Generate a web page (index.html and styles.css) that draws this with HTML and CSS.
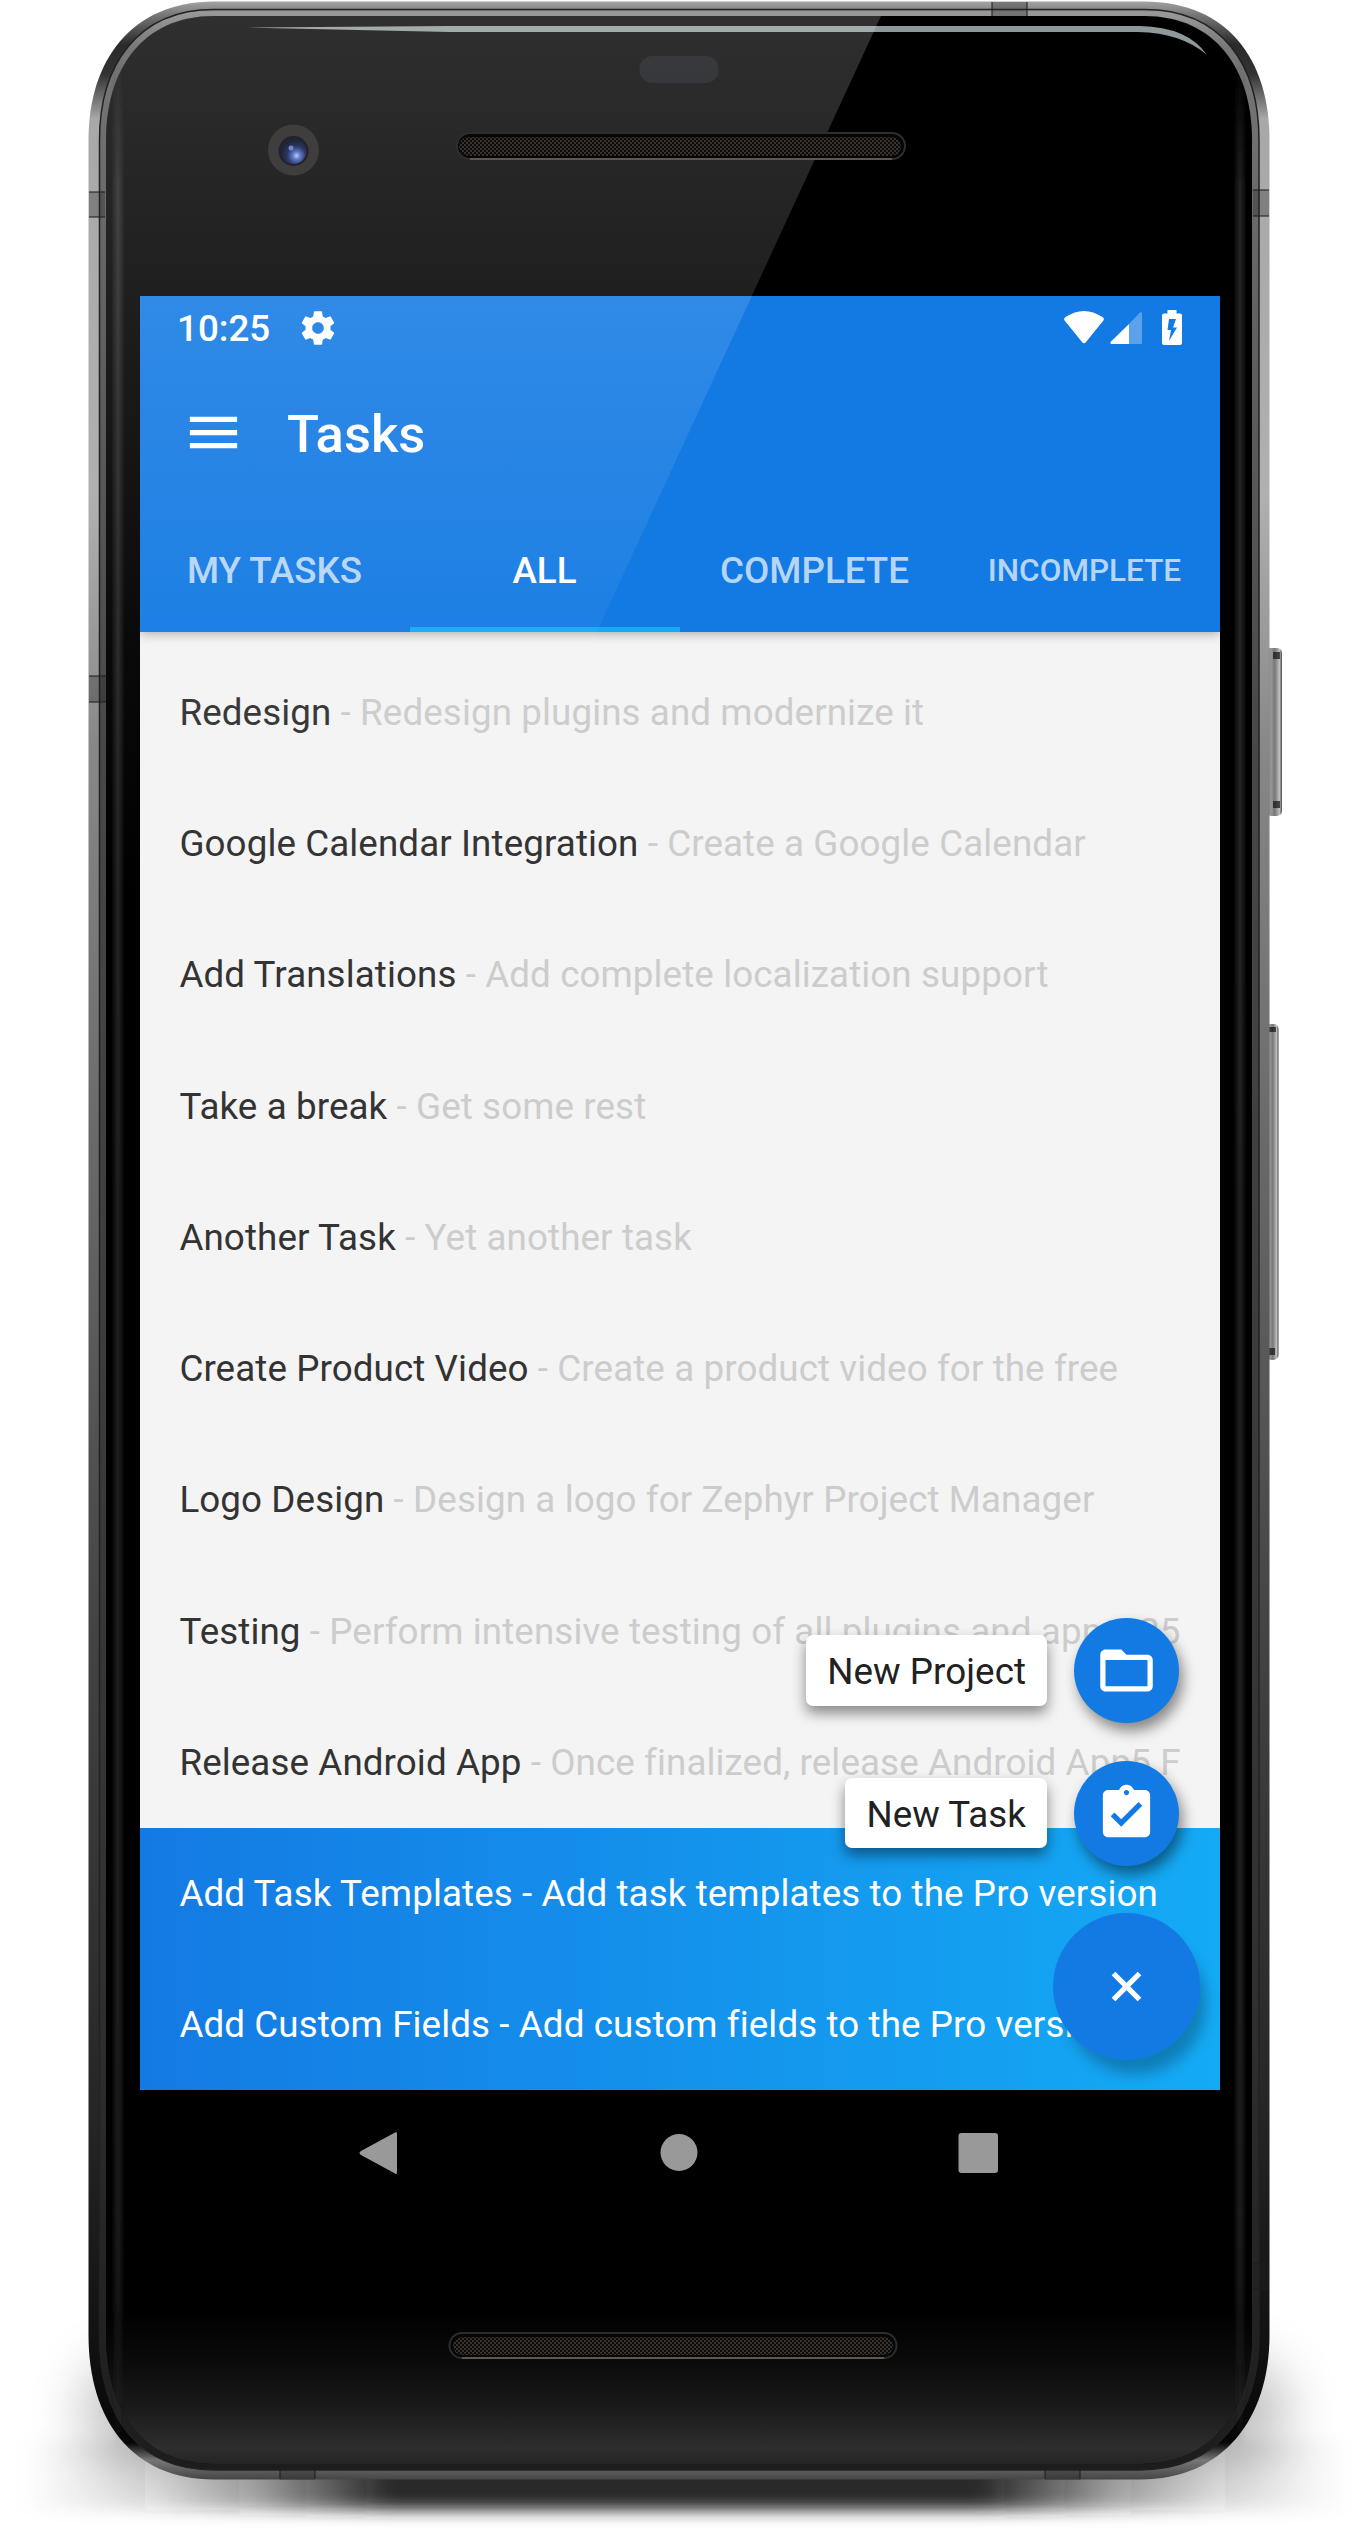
FILE: index.html
```html
<!DOCTYPE html>
<html lang="en">
<head>
<meta charset="utf-8">
<title>Tasks</title>
<link rel="stylesheet" href="styles.css">
</head>
<body>
<div class="device">
  <svg class="frame" viewBox="0 0 1370 2534" aria-hidden="true">
    <defs>
      <linearGradient id="metal" x1="0" y1="0" x2="0" y2="2480" gradientUnits="userSpaceOnUse">
        <stop offset="0" stop-color="#a8a8a8"/><stop offset=".006" stop-color="#777"/>
        <stop offset=".018" stop-color="#2a2a2a"/><stop offset=".03" stop-color="#333"/><stop offset=".048" stop-color="#a8a8a8"/>
        <stop offset=".2" stop-color="#b0b0b0"/><stop offset=".3" stop-color="#888"/><stop offset=".5" stop-color="#626262"/><stop offset=".65" stop-color="#454545"/>
        <stop offset=".85" stop-color="#262626"/><stop offset=".95" stop-color="#101010"/><stop offset=".985" stop-color="#060606"/>
        <stop offset=".992" stop-color="#777"/><stop offset="1" stop-color="#444"/>
      </linearGradient>
      <linearGradient id="metalInner" x1="0" y1="0" x2="0" y2="2480" gradientUnits="userSpaceOnUse">
        <stop offset="0" stop-color="#444"/><stop offset=".005" stop-color="#999"/><stop offset=".02" stop-color="#777"/><stop offset=".1" stop-color="#666"/>
        <stop offset=".3" stop-color="#484848"/><stop offset=".8" stop-color="#303030"/><stop offset="1" stop-color="#1c1c1c"/>
      </linearGradient>
      <linearGradient id="chin" x1="0" y1="2310" x2="0" y2="2464" gradientUnits="userSpaceOnUse">
        <stop offset="0" stop-color="#000"/><stop offset=".35" stop-color="#0b0b0b"/><stop offset=".65" stop-color="#1b1b1b"/><stop offset=".9" stop-color="#2e2e2e"/><stop offset="1" stop-color="#242424"/>
      </linearGradient>
      <linearGradient id="rim" x1="0" y1="60" x2="0" y2="2450" gradientUnits="userSpaceOnUse">
        <stop offset="0" stop-color="#333" stop-opacity="0"/><stop offset=".06" stop-color="#2c2c2c"/><stop offset=".9" stop-color="#242424"/><stop offset="1" stop-color="#333" stop-opacity="0"/>
      </linearGradient>
      <linearGradient id="floor" x1="20" y1="0" x2="1350" y2="0" gradientUnits="userSpaceOnUse">
        <stop offset="0" stop-color="#222" stop-opacity="0"/><stop offset=".1" stop-color="#222" stop-opacity=".14"/>
        <stop offset=".18" stop-color="#222" stop-opacity=".42"/><stop offset=".28" stop-color="#222" stop-opacity=".97"/>
        <stop offset=".72" stop-color="#222" stop-opacity=".97"/><stop offset=".82" stop-color="#222" stop-opacity=".42"/>
        <stop offset=".9" stop-color="#222" stop-opacity=".14"/><stop offset="1" stop-color="#222" stop-opacity="0"/>
      </linearGradient>
      <linearGradient id="button" x1="0" y1="0" x2="1" y2="0">
        <stop offset="0" stop-color="#555"/><stop offset=".3" stop-color="#999"/><stop offset=".55" stop-color="#777"/><stop offset=".85" stop-color="#c0c0c0"/><stop offset="1" stop-color="#444"/>
      </linearGradient>
      <pattern id="mesh" width="4" height="4" patternUnits="userSpaceOnUse">
        <rect width="4" height="4" fill="#0c0b09"/><circle cx="1" cy="1" r=".9" fill="#4b463c"/><circle cx="3" cy="3" r=".9" fill="#4b463c"/>
      </pattern>
      <filter id="soft" x="-10%" y="-60%" width="120%" height="220%"><feGaussianBlur stdDeviation="8"/></filter>
      <filter id="softer" x="-20%" y="-100%" width="140%" height="300%"><feGaussianBlur stdDeviation="28"/></filter>
      <filter id="edge" filterUnits="userSpaceOnUse" x="90" y="0" width="1180" height="2480"><feGaussianBlur stdDeviation="2.500"/></filter>
    </defs>

    <rect x="84" y="2360" width="1202" height="104" rx="50" fill="#000" opacity=".26" filter="url(#softer)"/>
    <rect x="20" y="2440" width="1330" height="70" fill="url(#floor)" filter="url(#soft)"/>

    <rect x="1266" y="648" width="16" height="168" rx="5" fill="url(#button)"/>
    <path d="M1273 652h7v7h-7zM1273 801h7v7h-7z" fill="#111" opacity=".7"/>
    <rect x="1266" y="1024" width="12.500" height="336" rx="5" fill="url(#button)"/>
    <path d="M1269 1027h7v5h-7zM1269 1348h6v7h-6z" fill="#111" opacity=".7"/>

    <path d="M214 1.500H1144C1228 1.500 1269.500 60 1269.500 140V2335C1269.500 2420 1222 2479.500 1140 2479.500H214C132 2479.500 88.500 2420 88.500 2335V140C88.500 60 132 1.500 214 1.500Z" fill="url(#metal)"/>
    <path d="M214 9.500H1144C1223 9.500 1259 66 1259 140V2335C1259 2416 1216 2470 1140 2470H214C137 2470 99.500 2416 99.500 2335V140C99.500 66 137 9.500 214 9.500Z" fill="url(#metalInner)" stroke="#222" stroke-width="1.500"/>
    <path d="M214 16H1144C1216 16 1252 70 1252 140V2335C1252 2410 1212 2464 1140 2464H214C142 2464 106 2410 106 2335V140C106 70 142 16 214 16Z" fill="#000"/>
    <path d="M106 2300H1252V2335C1252 2410 1212 2464 1140 2464H214C142 2464 106 2410 106 2335Z" fill="url(#chin)"/>
    <path d="M118 2400V100M1240 2400V100" fill="none" stroke="#2a2a2a" stroke-width="0"/>
    <rect x="115" y="60" width="6" height="2390" fill="url(#rim)" filter="url(#edge)"/>
    <rect x="1237" y="60" width="6" height="2390" fill="url(#rim)" filter="url(#edge)"/>

    <g fill="#222" fill-opacity=".3">
      <path d="M89 192h16v25h-16zM89 676h17v26h-17zM1253 190h16v26h-16zM992 2h35v14h-35zM1253 2263h16v26h-16zM280 2466h35v14h-35zM1045 2466h35v14h-35z"/>
    </g>
    <path d="M89 192h16M89 217h16M89 676h17M89 702h17M1253 190h16M1253 216h16M1253 2263h16M1253 2289h16M992 2v14M1027 2v14M280 2466v13M315 2466v13M1045 2466v13M1080 2466v13" stroke="#1c1c1c" stroke-opacity=".7" stroke-width="1.500"/>

    <rect x="639.500" y="56" width="79" height="27" rx="13" fill="#0e0f14"/>
    <path d="M247 27.500L450 26H1140Q1188 27 1207 55Q1182 33 1138 32H450Z" fill="#8f989a"/>
  </svg>

  <main class="screen">
    <header class="app-bar">
      <div class="status">
        <span class="clock">10:25</span>
        <svg class="gear" viewBox="0 0 24 24"><path d="M19.430 12.980c.04-.32.07-.64.07-.98s-.03-.66-.07-.98l2.110-1.650c.19-.15.24-.42.12-.64l-2-3.460c-.12-.22-.39-.3-.61-.22l-2.490 1c-.52-.4-1.080-.73-1.690-.98l-.38-2.650C14.460 2.180 14.250 2 14 2h-4c-.25 0-.46.18-.49.42l-.38 2.650c-.61.25-1.170.59-1.690.98l-2.490-1c-.23-.09-.49 0-.61.22l-2 3.460c-.13.22-.07.49.12.64l2.110 1.650c-.04.32-.07.65-.07.98s.03.66.07.98l-2.110 1.650c-.19.15-.24.42-.12.64l2 3.460c.12.22.39.3.61.22l2.490-1c.52.4 1.080.73 1.690.98l.38 2.650c.03.24.24.42.49.42h4c.25 0 .46-.18.49-.42l.38-2.650c.61-.25 1.170-.59 1.690-.98l2.490 1c.23.09.49 0 .61-.22l2-3.460c.12-.22.07-.49-.12-.64l-2.110-1.650zM12 15.500c-1.930 0-3.500-1.570-3.500-3.500s1.570-3.500 3.500-3.500 3.500 1.570 3.500 3.500-1.570 3.500-3.500 3.500z"/></svg>
        <svg class="signals" viewBox="0 0 118 36">
          <path d="M1 11Q-1 9 1.500 7Q20-5 38.500 7Q41 9 39 11L22 32Q20 34.500 18 32Z"/>
          <path d="M65 14V34H47.500Q45.500 33.500 47 31.500Z"/>
          <path d="M65 14L76 2.500Q78 1.500 78 3.500V32.500Q78 34 76.500 34H65Z" opacity=".3"/>
          <path fill-rule="evenodd" d="M103.500 0H112.500V3.500H116Q118 3.500 118 5.500V33Q118 35 116 35H100Q98 35 98 33V5.500Q98 3.500 100 3.500H103.500ZM105 9L103.500 20H107L105 31L113 17.500H109L112 9Z"/>
        </svg>
      </div>
      <div class="toolbar">
        <svg class="menu" viewBox="0 0 24 24"><path d="M3 18h18v-2H3v2zm0-5h18v-2H3v2zm0-7v2h18V6H3z"/></svg>
        <h1 class="title">Tasks</h1>
      </div>
      <nav class="tabs">
        <span class="tab">MY TASKS</span>
        <span class="tab tab-active">ALL</span>
        <span class="tab">COMPLETE</span>
        <span class="tab tab-small">INCOMPLETE</span>
      </nav>
    </header>

    <ul class="tasks">
      <li class="task"><span class="name">Redesign</span><span class="note"> - Redesign plugins and modernize it</span></li>
      <li class="task"><span class="name">Google Calendar Integration</span><span class="note"> - Create a Google Calendar</span></li>
      <li class="task"><span class="name">Add Translations</span><span class="note"> - Add complete localization support</span></li>
      <li class="task"><span class="name">Take a break</span><span class="note"> - Get some rest</span></li>
      <li class="task"><span class="name">Another Task</span><span class="note"> - Yet another task</span></li>
      <li class="task"><span class="name">Create Product Video</span><span class="note"> - Create a product video for the free</span></li>
      <li class="task"><span class="name">Logo Design</span><span class="note"> - Design a logo for Zephyr Project Manager</span></li>
      <li class="task"><span class="name">Testing</span><span class="note"> - Perform intensive testing of all plugins and apps</span><span class="due">25</span></li>
      <li class="task"><span class="name">Release Android App</span><span class="note"> - Once finalized, release Android App</span><span class="due">5 F</span></li>
      <li class="task task-pro">Add Task Templates - Add task templates to the Pro version</li>
      <li class="task task-pro">Add Custom Fields - Add custom fields to the Pro version</li>
    </ul>

    <div class="actions">
      <div class="action">
        <span class="label">New Project</span>
        <span class="fab"><svg viewBox="0 0 24 24"><path d="M20 6h-8l-2-2H4c-1.100 0-1.990.9-1.990 2L2 18c0 1.100.9 2 2 2h16c1.100 0 2-.9 2-2V8c0-1.100-.9-2-2-2zm0 12H4V8h16v10z"/></svg></span>
      </div>
      <div class="action">
        <span class="label">New Task</span>
        <span class="fab"><svg viewBox="0 0 24 24"><path d="M19 3h-4.180C14.400 1.840 13.300 1 12 1c-1.300 0-2.400.84-2.820 2H5c-1.100 0-2 .9-2 2v14c0 1.100.9 2 2 2h14c1.100 0 2-.9 2-2V5c0-1.100-.9-2-2-2zm-7 0c.55 0 1 .45 1 1s-.45 1-1 1-1-.45-1-1 .45-1 1-1zm-2 14l-4-4 1.410-1.410L10 14.170l6.590-6.590L18 9l-8 8z"/></svg></span>
      </div>
      <span class="fab fab-main"><svg viewBox="0 0 24 24"><path transform="rotate(45 12 12)" d="M19 13h-6v6h-2v-6H5v-2h6V5h2v6h6v2z"/></svg></span>
    </div>
  </main>

  <div class="nav-keys">
    <svg viewBox="0 0 40 44"><path d="M37 1.500Q39 0 39 3V41Q39 44 37 42.500L3 24Q0 22 3 20Z"/></svg>
    <svg viewBox="0 0 40 44"><circle cx="21" cy="21.500" r="18.500"/></svg>
    <svg viewBox="0 0 40 44"><rect x=".5" y="2" width="39.500" height="40" rx="3"/></svg>
  </div>

  <svg class="glass" viewBox="0 0 1370 2534" aria-hidden="true">
    <defs>
      <linearGradient id="glare" x1="0" y1="16" x2="0" y2="900" gradientUnits="userSpaceOnUse">
        <stop offset="0" stop-color="#fff" stop-opacity=".185"/><stop offset=".31" stop-color="#fff" stop-opacity=".122"/>
        <stop offset=".7" stop-color="#fff" stop-opacity=".04"/><stop offset="1" stop-color="#fff" stop-opacity="0"/>
      </linearGradient>
      <radialGradient id="lens" cx=".62" cy=".68" r=".6">
        <stop offset="0" stop-color="#b9caf8"/><stop offset=".25" stop-color="#5f78c8"/><stop offset=".6" stop-color="#2c3860"/><stop offset="1" stop-color="#20243a"/>
      </radialGradient>
    </defs>
    <path d="M214 16H881L473 900H106V140C106 70 142 16 214 16Z" fill="url(#glare)"/>
    <circle cx="293.500" cy="150" r="25.500" fill="#403d3d"/>
    <circle cx="293.500" cy="151" r="15" fill="#22222a"/>
    <circle cx="293.500" cy="151" r="13" fill="url(#lens)"/>
    <circle cx="291" cy="148" r="2.500" fill="#6f87d0"/>
    <g stroke-width="2" fill="#060606">
      <rect x="457" y="133" width="448" height="26" rx="13" stroke="#2e2e2e"/>
      <rect x="449.500" y="2333" width="447" height="25" rx="12.500" stroke="#2c2c2c"/>
      <path d="M470 159H892M462 2358H884" stroke="#5a5852"/>
    </g>
    <rect x="459" y="137" width="442" height="19" rx="9.500" fill="url(#mesh)"/>
    <rect x="453" y="2337" width="440" height="18" rx="9" fill="url(#mesh)"/>
  </svg>
</div>
</body>
</html>
```
FILE: styles.css
```css
* { box-sizing: border-box; }

body {
  margin: 0;
  background: #fff;
  font-family: Roboto, "Liberation Sans", sans-serif;
  font-size: 36.75px;
}

.device {
  position: relative;
  width: 1370px;
  height: 2534px;
  padding: 296px 150px 0 140px;
  overflow: hidden;
}

.frame, .glass {
  position: absolute;
  inset: 0;
  width: 1370px;
  height: 2534px;
}

.screen {
  position: relative;
  width: 1080px;
  height: 1794px;
  overflow: hidden;
  background: #f4f4f4;
}

.app-bar {
  position: relative;
  height: 336px;
  background: #147ae3;
  color: #fff;
  box-shadow: 0 2px 10px rgba(0, 0, 0, .3);
}

.status {
  display: flex;
  align-items: center;
  height: 63px;
  padding: 0 38px 0 37px;
}

.clock { width: 121px; padding-top: 2px; font-weight: 500; }
.gear { width: 40px; height: 40px; fill: #fff; }
.signals { width: 118px; height: 36px; margin-left: auto; fill: #fff; }

.toolbar {
  display: flex;
  align-items: center;
  height: 147px;
  padding-left: 42px;
}

.menu { width: 63px; height: 63px; fill: #fff; }

.title {
  margin: 0 0 0 42px;
  padding-top: 4px;
  font-size: 52.5px;
  font-weight: 500;
  line-height: 1;
}

.tabs {
  display: grid;
  grid-template-columns: repeat(4, 1fr);
  height: 126px;
}

.tab {
  display: flex;
  align-items: center;
  justify-content: center;
  padding: 2px 1px 0 0;
  border: solid transparent;
  border-width: 5px 0;
  font-weight: 500;
  color: rgba(255, 255, 255, .7);
}

.tab-active { color: #fff; border-bottom-color: #14aaf5; }
.tab-small { font-size: 31.5px; }

.tasks {
  margin: 0;
  padding: 14.75px 0 0;
  list-style: none;
}

.task {
  position: relative;
  height: 131.25px;
  padding: 0 39.4px;
  line-height: 131.25px;
  letter-spacing: .1px;
  white-space: pre;
  overflow: hidden;
  color: #333;
}

.note, .due { color: #ccc; }

.due {
  position: absolute;
  right: 39.4px;
  top: 0;
}

.task-pro {
  color: #fff;
  background: linear-gradient(90deg, #147ae3, #14aaf5);
}

.actions {
  position: absolute;
  right: 20px;
  top: 1322px;
  display: flex;
  flex-direction: column;
  align-items: flex-end;
}

.action {
  display: flex;
  align-items: center;
  gap: 27px;
  height: 105px;
  margin: 0 21px 37.5px 0;
}

.label {
  height: 70.5px;
  padding: 0 21px;
  border-radius: 7px;
  background: #fff;
  color: #212121;
  line-height: 74px;
  letter-spacing: .05px;
  box-shadow: 0 7px 14px rgba(0, 0, 0, .45);
}

.fab {
  display: flex;
  align-items: center;
  justify-content: center;
  width: 105px;
  height: 105px;
  border-radius: 50%;
  background: #147ae3;
  box-shadow: 4px 8px 14px rgba(0, 0, 0, .45);
}

.fab svg { width: 63px; height: 63px; fill: #fff; }

.fab-main {
  width: 147px;
  height: 147px;
  margin-top: 10px;
  box-shadow: 9px 17px 14px -3px rgba(0, 0, 0, .25);
}

.nav-keys {
  position: relative;
  display: flex;
  justify-content: space-between;
  margin: 41px 222px 0 218px;
}

.nav-keys svg { width: 40px; height: 44px; fill: #999; }
```
